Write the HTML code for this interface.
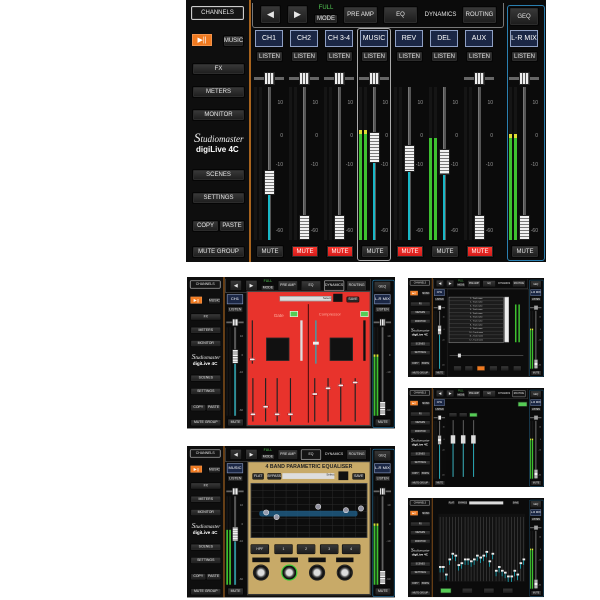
<!DOCTYPE html>
<html><head><meta charset="utf-8">
<style>
*{margin:0;padding:0;box-sizing:border-box}
body{width:600px;height:600px;background:#fff;position:relative;overflow:hidden;font-family:"Liberation Sans",sans-serif}
.f{position:absolute;left:0;top:0;width:360px;height:262px;background:#0b0b0b;overflow:hidden;color:#ddd;transform-origin:0 0}
.f div{position:absolute}
.b{background:linear-gradient(#3a3a3a,#1c1c1c);border:1px solid #050505;box-shadow:inset 0 0 0 1px #2c2c2c;font-size:6px;text-align:center;color:#e6e6e6;display:flex;align-items:center;justify-content:center;border-radius:2px;white-space:nowrap}
.lab{background:#1b2745;border:1px solid #8fa0c4;font-size:7px;color:#fff;display:flex;align-items:center;justify-content:center}
.sc{font-size:5px;color:#999;text-align:right;width:12px}
.cap{background:repeating-linear-gradient(#f2f2f2 0 2px,#7a7a7a 2px 3px);border:1px solid #222;border-radius:1px}
.red{background:linear-gradient(#ff3a30,#d01818)!important;color:#fff!important}
</style></head><body>
<div id="main" style="position:absolute;left:186px;top:0;width:360px;height:262px"></div>
<div id="l1" style="position:absolute;left:187px;top:277px;width:208px;height:152px;overflow:hidden"></div>
<div id="l2" style="position:absolute;left:187px;top:446px;width:208px;height:152px;overflow:hidden"></div>
<div id="r1" style="position:absolute;left:408px;top:278px;width:136px;height:99px;overflow:hidden"></div>
<div id="r2" style="position:absolute;left:408px;top:388px;width:136px;height:99px;overflow:hidden"></div>
<div id="r3" style="position:absolute;left:408px;top:498px;width:136px;height:100px;overflow:hidden"></div>
<script>
function bx(x,y,w,h,t,c,st){return '<div class="b '+(c||'')+'" style="left:'+x+'px;top:'+y+'px;width:'+w+'px;height:'+h+'px;'+(st||'')+'">'+(t||'')+'</div>';}
function d(x,y,w,h,st,t){return '<div style="left:'+x+'px;top:'+y+'px;width:'+w+'px;height:'+h+'px;'+st+'">'+(t||'')+'</div>';}
function sidebar(){
 var s='';
 s+=d(0,0,63,262,'background:#0e0e0e');
 s+=bx(5,6,53,14,'CHANNELS','','border:1px solid #ccc;background:#151515');
 s+=d(6,34,20,12,'background:#f07a20;border:1px solid #fff3;color:#fff;font-size:7px;text-align:center;line-height:11px','&#9654;||');
 s+=bx(37,35,21,12,'MUSIC');
 s+=bx(6,63,53,12,'FX');s+=bx(6,86,53,12,'METERS');s+=bx(6,109,53,12,'MONITOR');
 s+=d(8,130,55,14,'font-family:Liberation Serif,serif;font-style:italic;font-size:9px;color:#eee;white-space:nowrap','<span style="font-size:13px">S</span>tudiomaster');
 s+=d(10,145,50,10,'font-size:8px;color:#fff;font-weight:bold;white-space:nowrap','digiLive 4C');
 s+=bx(6,169,53,12,'SCENES');s+=bx(6,192,53,12,'SETTINGS');
 s+=bx(6,220,27,12,'COPY');s+=bx(33,220,26,12,'PASTE');
 s+=bx(6,246,53,12,'MUTE GROUP');
 s+=d(63,0,2,262,'background:#a8641e');
 return s;
}
function topbar(act){
 var s='';
 s+=d(66,3,252,25,'border:1px solid #777;border-top:none;border-radius:0 0 3px 3px');
 s+=bx(74,5,21,19,'<span style="font-size:9px">&#9664;</span>');
 s+=bx(101,5,21,19,'<span style="font-size:9px">&#9654;</span>');
 s+=d(128,5,24,8,'color:#5c5;font-size:6px;text-align:center','FULL');
 s+=bx(128,14,24,10,'MODE');
 var tb=[['PRE AMP',157],['EQ',197],['DYNAMICS',237],['ROUTING',276]];
 tb.forEach(function(t){
   var st=(t[0]=='DYNAMICS'&&act!='DYNAMICS')?'background:none;box-shadow:none;border-color:transparent':'';
   if(t[0]==act)st='border:1px solid #bbb;background:#151515';
   s+=bx(t[1],6,35,18,t[0],'',st);});
 s+=bx(323,7,30,19,'GEQ');
 s+=d(321,5,38,256,'border:1px solid #2a7fb0;border-radius:3px');
 return s;
}
function strip(sx,name,cap,capH,mute,pan,meter,teal,redm){
 var s='';
 if(name)s+='<div class="lab" style="left:'+(sx+2)+'px;top:30px;width:28px;height:17px">'+name+'</div>';
 s+=bx(sx+3,51,27,11,'LISTEN');
 if(pan){s+=d(sx+1,77,30,3,'background:#666');s+=d(sx+11,72,11,13,'background:repeating-linear-gradient(90deg,#eee 0 2px,#555 2px 3px);border:1px solid #222');}
 s+=d(sx+1,87,3,153,'background:#151515');s+=d(sx+6,87,3,153,'background:#151515');
 if(meter){s+=d(sx+1,meter,3,240-meter,'background:#3ec030');s+=d(sx+6,meter,3,240-meter,'background:#3ec030');if(meter<135){s+=d(sx+1,meter,3,4,'background:#dd3');s+=d(sx+6,meter,3,4,'background:#dd3');}}
 s+=d(sx+15,87,3,153,'background:#555;border-left:1px solid #777');
 if(teal)s+=d(sx+15,cap+capH,2,240-cap-capH,'background:#19b8c8');
 [['10',100],['0',133],['-10',162],['-60',228]].forEach(function(v){s+='<div class="sc" style="left:'+(sx+18)+'px;top:'+v[1]+'px">'+v[0]+'</div>';});
 s+='<div class="cap" style="left:'+(sx+11)+'px;top:'+cap+'px;width:11px;height:'+capH+'px"></div>';
 s+=bx(sx+3,245,28,13,'MUTE',redm?'red':'');
 return s;
}
function frame(content,act,full){
 var s=sidebar()+topbar(act);
 if(full){
  var ch=[['CH1',170,25,0,1,0,1,0],['CH2',215,25,0,1,0,0,1],['CH 3-4',215,25,0,1,0,0,1],['MUSIC',132,31,0,1,130,1,0],['REV',145,27,0,0,0,1,1],['DEL',149,26,0,0,138,1,0],['AUX',215,25,0,1,0,0,1]];
  ch.forEach(function(c,i){s+=strip(67+35*i,c[0],c[1],c[2],0,c[4],c[5],c[6],c[7]);});
  s+=d(171,28,34,233,'border:1px solid #aaa;border-radius:3px');
 } else {
  s+=strip(67,act=='EQ'?'MUSIC':'CH1',act=='EQ'?140:125,25,0,1,act=='EQ'?145:0,1,0);
 }
 s+=strip(322,'L-R MIX',215,25,0,1,134,0,0);
 s+=content;
 return '<div class="f">'+s+'</div>';
}
document.getElementById('main').innerHTML=frame('','',true);
var red=d(103,24,215,234,'background:#e8332c;border:2px solid #444');
red+=d(160,33,90,9,'background:#ddd;border:1px solid #888;font-size:5px;color:#222;text-align:right','Select ');
red+=d(253,29,16,14,'background:#111');red+=bx(276,34,22,10,'SAVE');
red+=d(209,47,2,205,'background:#5a1010');
red+=d(150,62,30,10,'color:#ffb0a0;font-size:8px','Gate');red+=d(228,62,50,10,'color:#ffb0a0;font-size:7px','Compressor');
red+=d(178,59,14,10,'background:#5c5;border:1px solid #fff');red+=d(300,59,14,10,'background:#5c5;border:1px solid #fff');
red+=d(137,105,40,40,'background:#111;border:1px solid #333');red+=d(247,105,40,40,'background:#111;border:1px solid #333');
red+=d(196,75,4,70,'background:#ddd');red+=d(305,75,4,70,'background:#111');
red+=d(112,75,2,75,'background:#222');red+=d(108,140,10,5,'background:#eee;border:1px solid #a00');
red+=d(222,75,2,75,'background:#19b8c8');red+=d(218,112,10,5,'background:#eee');
[[113,235],[135,222],[155,235],[178,235],[220,200],[243,190],[265,185],[290,180]].forEach(function(p){red+=d(p[0],175,2,75,'background:#222');red+=d(p[0]-4,p[1],10,5,'background:#eee;border:1px solid #a00');});
document.getElementById('l1').innerHTML=frame(red,'DYNAMICS',false);
var g=d(104,26,214,232,'background:#c8aa68;border:2px solid #333');
g+=d(104,30,214,12,'font-size:9px;font-weight:bold;color:#222;text-align:center','4 BAND PARAMETRIC EQUALISER');
g+=bx(113,47,20,11,'FLAT');g+=bx(139,47,24,11,'BYPASS');g+=d(165,47,90,10,'background:#ddd;font-size:5px;color:#222;text-align:right','Select ');
g+=d(262,44,17,15,'background:#111');g+=bx(286,47,22,11,'SAVE');
g+=d(110,64,202,95,'background:#0d0d0d;border:1px solid #555;background-image:linear-gradient(90deg,#2a2a2a 1px,transparent 1px),linear-gradient(#2a2a2a 1px,transparent 1px);background-size:20px 12px');
g+=d(125,112,170,10,'background:#1f5f8a;opacity:.8;border-radius:4px');
[[132,110],[150,118],[222,100],[270,106],[296,103]].forEach(function(p){g+=d(p[0],p[1],10,10,'background:#aab;border-radius:50%;border:1px solid #fff;opacity:.85');});
[110,151,190,230,268].forEach(function(x,i){g+=bx(x,170,32,17,['HPF','1','2','3','4'][i]);});
[113,162,210,258].forEach(function(x,i){g+=d(x,193,30,8,'background:#111');g+=d(x+1,205,28,28,'background:radial-gradient(#ddd 30%,#555 45%,#111 60%);border-radius:50%;border:2px solid '+(i==1?'#3c3':'#222'));});
document.getElementById('l2').innerHTML=frame(g,'EQ',false);
var m=d(103,29,217,232,'background:#0c0c0c;border:1px solid #333');
var lst='';for(var i=0;i<12;i++)lst+='<div style="position:relative;height:10px;border-bottom:1px solid #555;font-size:5px;color:#ccc;text-align:center">'+(i+1)+' - Track name</div>';
m+=d(108,50,145,122,'background:#1c1c1c;border:1px solid #aaa',lst);
m+=d(255,50,12,120,'background:#eee;border:1px solid #888');
m+=d(283,70,4,100,'background:#3ec030');m+=d(292,70,4,100,'background:#3ec030');
m+=d(110,204,195,2,'background:#555');m+=d(132,200,8,10,'background:#ddd');
[120,150,182,215,245,278].forEach(function(x,i){m+=bx(x,232,22,14,'',i==2?'red':'',i==2?'background:#f07a20!important':'');});
document.getElementById('r1').innerHTML=frame(m,'',false);
var r=d(103,29,217,232,'background:#0a0a0a');
r+=bx(290,36,26,14,'','','background:#5c5');
[108,135,162].forEach(function(x,i){r+=bx(x,65,22,12,'','',i==2?'background:#5c5':'');r+=d(x+10,85,3,150,'background:#555');r+=d(x+5,125,12,22,'background:#ddd');r+=d(x+10,147,2,88,'background:#19b8c8');});
document.getElementById('r2').innerHTML=frame(r,'ROUTING',false);
var q=d(66,0,255,262,'background:#0b0b0b');
q+=bx(105,8,20,10,'FLAT');q+=bx(132,8,25,10,'BYPASS');q+=d(162,9,90,8,'background:#ddd');q+=bx(275,8,20,10,'SAVE');
q+=d(80,42,230,180,'background:#111');
var ys=[180,180,200,160,145,150,175,170,160,160,165,160,150,155,150,140,165,145,190,180,190,195,205,205,190,200,170,160];
for(var k=0;k<28;k++){var x=82+k*8.2;q+=d(x+2,50,2,170,'background:#3a3a3a');q+=d(x,ys[k],7,5,'background:#eee');q+=d(x+2,ys[k]+5,2,12,'background:#19b8c8');}
q+=bx(85,238,30,14,'','','background:#5c5');[143,200,250].forEach(function(x){q+=bx(x,238,28,14,'');});
document.getElementById('r3').innerHTML=frame(q,'',false);
document.querySelector('#l1 .f').style.transform='scale(0.578)';
document.querySelector('#l2 .f').style.transform='scale(0.578)';
['r1','r2','r3'].forEach(function(id){document.querySelector('#'+id+' .f').style.transform='scale(0.378)';});
</script>
</body></html>
